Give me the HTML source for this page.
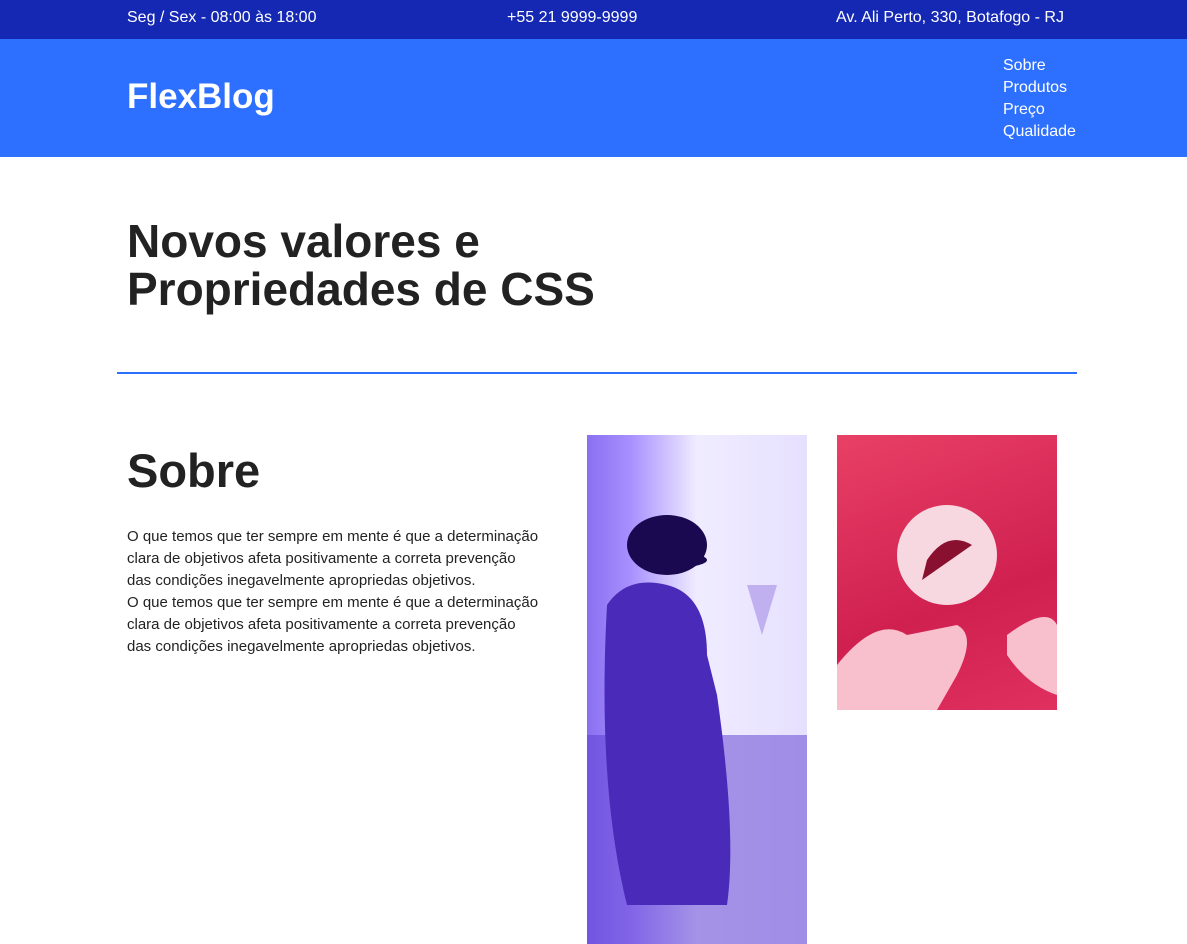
<!DOCTYPE html>
<html><head><meta charset="utf-8"><style>
*{margin:0;padding:0;box-sizing:border-box}
body{width:1187px;height:944px;overflow:hidden;background:#fff;font-family:"Liberation Sans",sans-serif;color:#222}
.top{height:39px;background:#1428b4;color:#fff;font-size:16px;position:relative}
.top span{position:absolute;top:9px}
.hdr{height:118px;background:#2d70ff;position:relative;color:#fff}
.logo{position:absolute;left:127px;top:38px;font-size:35px;font-weight:bold}
.nav{position:absolute;left:1003px;top:16px;font-size:16px;line-height:22px}
h1{position:absolute;left:127px;top:217px;font-size:46px;line-height:48px;font-weight:bold;color:#222}
.hr{position:absolute;left:117px;top:372px;width:960px;height:2px;background:#2d70ff}
h2{position:absolute;left:127px;top:443px;font-size:47px;font-weight:bold}
p{position:absolute;left:127px;top:526px;white-space:nowrap;font-size:15px;line-height:22px}
.i1{position:absolute;left:587px;top:435px;width:220px;height:509px;overflow:hidden;
background:linear-gradient(90deg,#8a70f0 0%,#a890ff 20%,#f0ecff 50%,#e6e0ff 100%)}
.i2{position:absolute;left:837px;top:435px;width:220px;height:275px;overflow:hidden;
background:linear-gradient(160deg,#e84066,#d02050 60%,#e03060)}
</style></head><body>
<div class="top"><span style="left:127px">Seg / Sex - 08:00 às 18:00</span><span style="left:507px">+55 21 9999-9999</span><span style="left:836px">Av. Ali Perto, 330, Botafogo - RJ</span></div>
<div class="hdr"><div class="logo">FlexBlog</div><div class="nav">Sobre<br>Produtos<br>Preço<br>Qualidade</div></div>
<h1>Novos valores e<br>Propriedades de CSS</h1>
<div class="hr"></div>
<h2>Sobre</h2>
<p>O que temos que ter sempre em mente é que a determinação<br>clara de objetivos afeta positivamente a correta prevenção<br>das condições inegavelmente apropriedas objetivos.<br>O que temos que ter sempre em mente é que a determinação<br>clara de objetivos afeta positivamente a correta prevenção<br>das condições inegavelmente apropriedas objetivos.</p>
<div class="i1"><svg width="220" height="509">
<rect x="0" y="300" width="220" height="209" fill="#5a3ad0" opacity=".5"/>
<path d="M20 170 Q40 140 80 150 Q120 160 120 220 L130 260 Q150 400 140 470 L40 470 Q10 350 20 170Z" fill="#4a2ab8"/>
<ellipse cx="80" cy="110" rx="40" ry="30" fill="#1a0850"/>
<ellipse cx="85" cy="125" rx="35" ry="8" fill="#1a0850"/>
<path d="M160 150 L175 200 L190 150Z" fill="#c0b0f0"/>
</svg></div>
<div class="i2"><svg width="220" height="275">
<circle cx="110" cy="120" r="50" fill="#f8d8e0"/>
<path d="M85 145 L135 110 Q110 95 90 125Z" fill="#8a1030"/>
<path d="M0 230 Q40 180 70 200 L120 190 Q140 200 120 240 L100 275 L0 275Z" fill="#f8c0cc"/>
<path d="M170 200 Q210 170 220 190 L220 260 Q190 250 170 220Z" fill="#f8c0cc"/>
</svg></div>
</body></html>
